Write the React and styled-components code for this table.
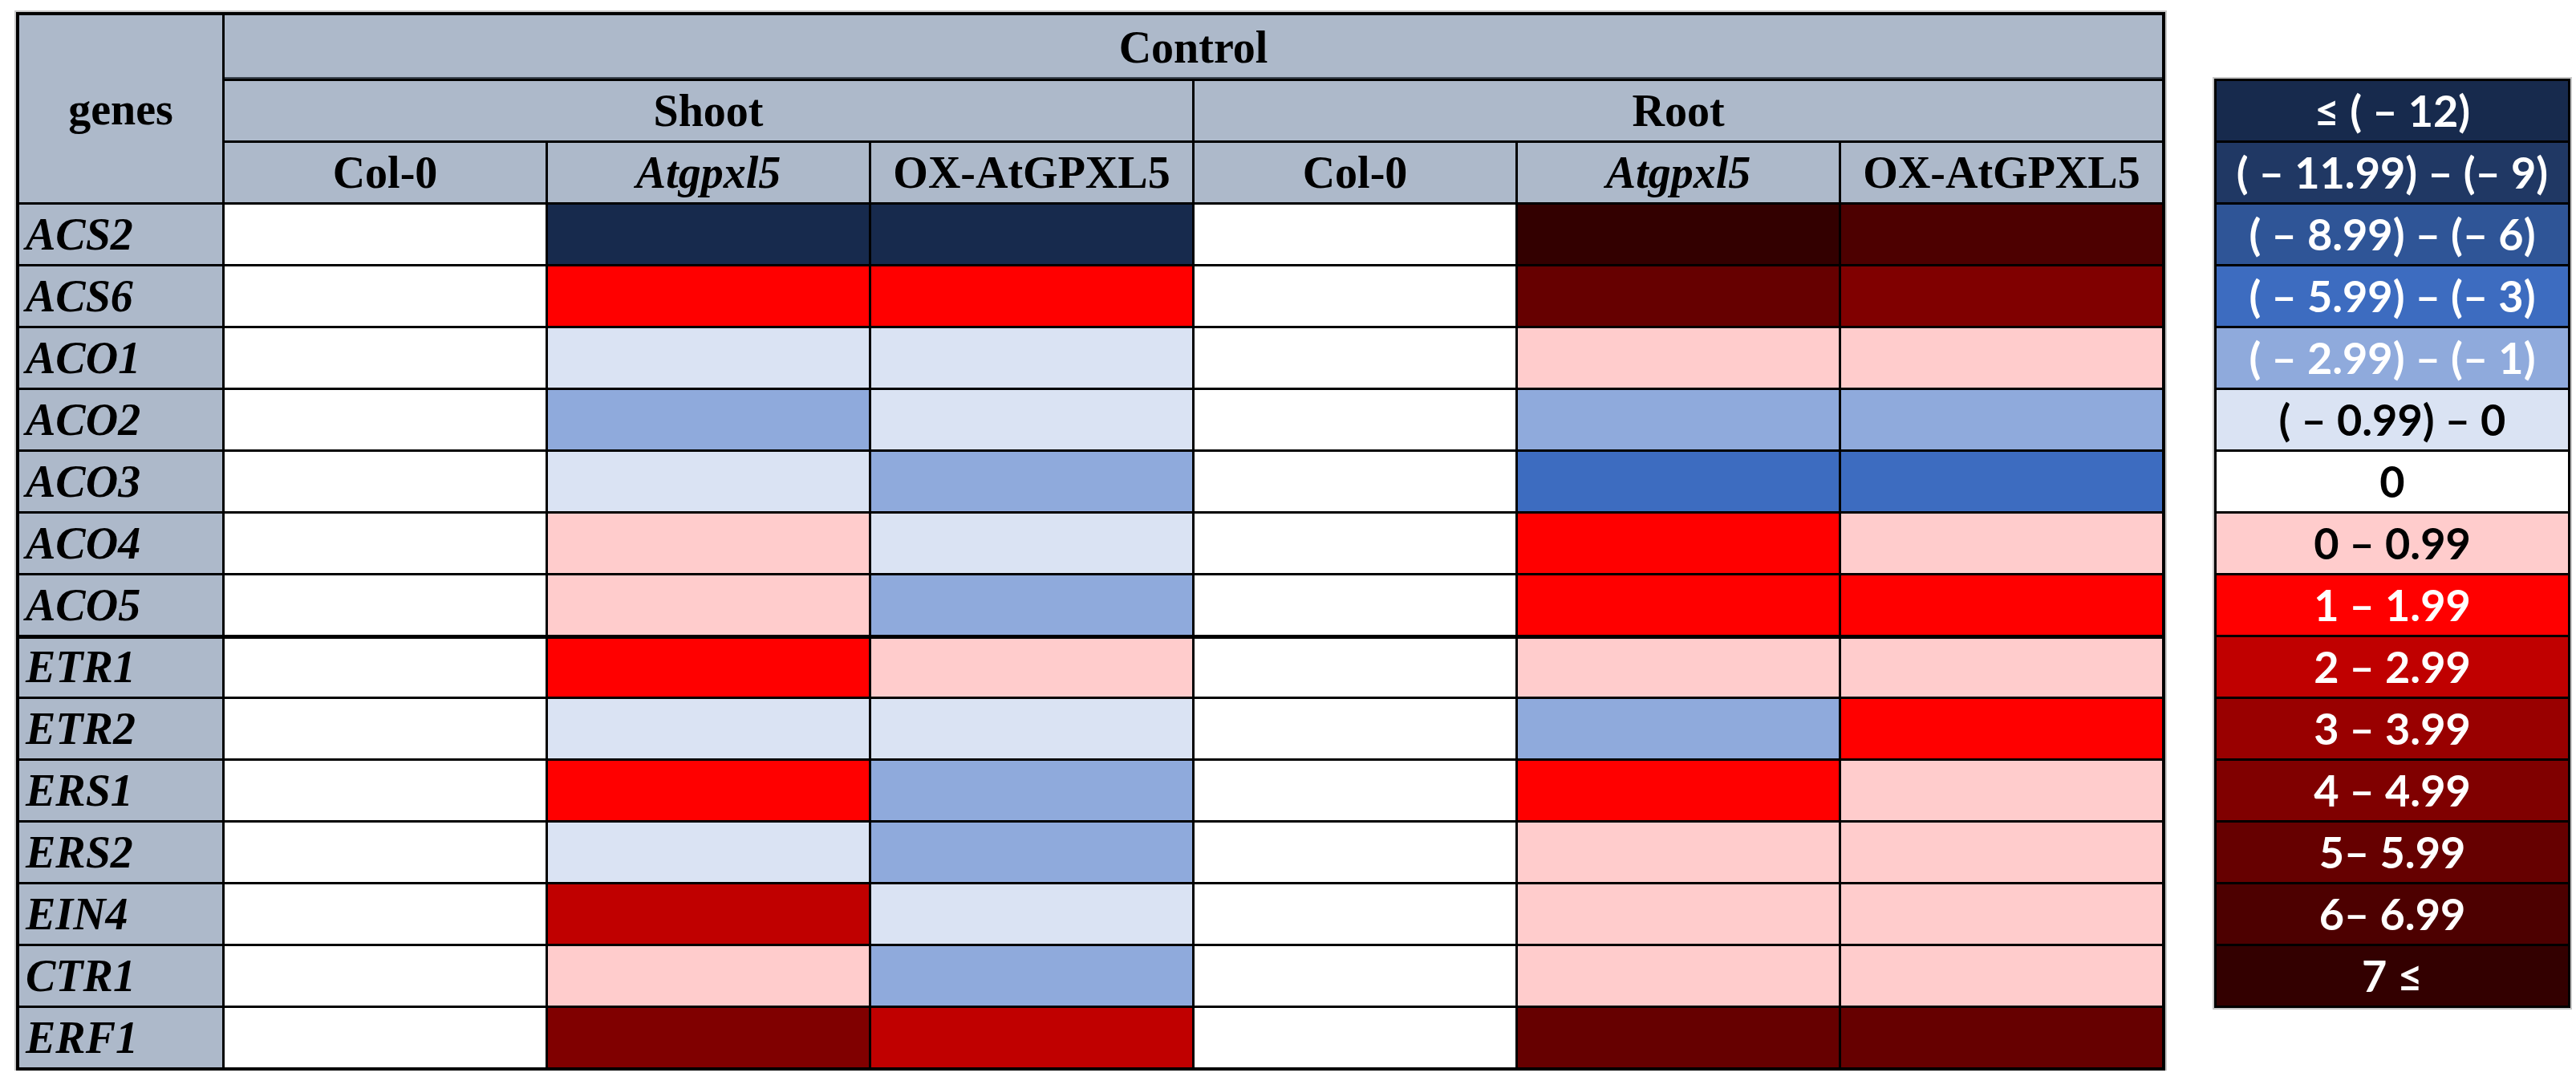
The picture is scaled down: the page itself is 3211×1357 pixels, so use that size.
import React from 'react';
import styled, { createGlobalStyle } from 'styled-components';

const GlobalStyle = createGlobalStyle`
  html, body {
    margin: 0;
    padding: 0;
    background: #fff;
  }
`;

/* colour scale, same order as the legend */
const SCALE = {
  n12: '#172a4d',
  n9: '#203864',
  n6: '#2f5597',
  n3: '#3d6cc0',
  n1: '#8faadc',
  n0: '#dae3f3',
  z: '#ffffff',
  p0: '#ffcccc',
  p1: '#ff0000',
  p2: '#c00000',
  p3: '#990000',
  p4: '#800000',
  p5: '#660000',
  p6: '#4d0000',
  p7: '#330000',
};

const LEGEND = [
  { key: 'n12', label: '≤ ( – 12)', light: true },
  { key: 'n9', label: '( – 11.99) – (– 9)', light: true },
  { key: 'n6', label: '( – 8.99) – (– 6)', light: true },
  { key: 'n3', label: '( – 5.99) – (– 3)', light: true },
  { key: 'n1', label: '( – 2.99) – (– 1)', light: true },
  { key: 'n0', label: '( – 0.99) – 0' },
  { key: 'z', label: '0' },
  { key: 'p0', label: '0 – 0.99' },
  { key: 'p1', label: '1 – 1.99', light: true },
  { key: 'p2', label: '2 – 2.99', light: true },
  { key: 'p3', label: '3 – 3.99', light: true },
  { key: 'p4', label: '4 – 4.99', light: true },
  { key: 'p5', label: '5– 5.99', light: true },
  { key: 'p6', label: '6– 6.99', light: true },
  { key: 'p7', label: '7 ≤', light: true },
];

// shoot: Col-0, Atgpxl5, OX | root: Col-0, Atgpxl5, OX
const GENES = [
  { name: 'ACS2', v: ['z', 'n12', 'n12', 'z', 'p7', 'p6'] },
  { name: 'ACS6', v: ['z', 'p1', 'p1', 'z', 'p5', 'p4'] },
  { name: 'ACO1', v: ['z', 'n0', 'n0', 'z', 'p0', 'p0'] },
  { name: 'ACO2', v: ['z', 'n1', 'n0', 'z', 'n1', 'n1'] },
  { name: 'ACO3', v: ['z', 'n0', 'n1', 'z', 'n3', 'n3'] },
  { name: 'ACO4', v: ['z', 'p0', 'n0', 'z', 'p1', 'p0'] },
  { name: 'ACO5', v: ['z', 'p0', 'n1', 'z', 'p1', 'p1'] },
  { name: 'ETR1', v: ['z', 'p1', 'p0', 'z', 'p0', 'p0'], thick: true },
  { name: 'ETR2', v: ['z', 'n0', 'n0', 'z', 'n1', 'p1'] },
  { name: 'ERS1', v: ['z', 'p1', 'n1', 'z', 'p1', 'p0'] },
  { name: 'ERS2', v: ['z', 'n0', 'n1', 'z', 'p0', 'p0'] },
  { name: 'EIN4', v: ['z', 'p2', 'n0', 'z', 'p0', 'p0'] },
  { name: 'CTR1', v: ['z', 'p0', 'n1', 'z', 'p0', 'p0'] },
  { name: 'ERF1', v: ['z', 'p4', 'p2', 'z', 'p5', 'p5'] },
];

const Page = styled.div`
  display: flex;
  align-items: flex-start;
  padding: 15px 0 0 20px;
`;

const Table = styled.div`
  display: grid;
  grid-template-columns: 253px repeat(6, 400px);
  grid-template-rows: 79px repeat(16, 74px);
  gap: 3px;
  background: #000;
  border: 4px solid #000;
  box-shadow: 0 0 0 2px #c8c8c8;
  font-family: 'Liberation Serif', 'Times New Roman', serif;
  font-weight: bold;
  font-size: 56px;
  color: #000;
`;

const Head = styled.div`
  background: #adb9ca;
  display: flex;
  align-items: center;
  justify-content: center;
  line-height: 1;
  font-style: ${(p) => (p.italic ? 'italic' : 'normal')};
  grid-column: ${(p) => p.col || 'auto'};
  grid-row: ${(p) => p.row || 'auto'};
  box-shadow: ${(p) => (p.underline ? 'inset 0 -2px 0 #3c4550' : 'none')};
`;

const GeneName = styled.div`
  background: #adb9ca;
  display: flex;
  align-items: center;
  padding-left: 8px;
  line-height: 1;
  font-style: italic;
  box-shadow: ${(p) => (p.thick ? 'inset 0 2px 0 #000' : 'none')};
`;

const Cell = styled.div`
  background: ${(p) => p.fill};
  box-shadow: ${(p) => (p.thick ? 'inset 0 2px 0 #000' : 'none')};
`;

const Legend = styled.div`
  display: grid;
  grid-template-columns: 438px;
  grid-auto-rows: 74px;
  gap: 3px;
  margin: 83px 0 0 61px;
  background: #000;
  border: 3px solid #000;
  box-shadow: 0 0 0 2px #c8c8c8;
`;

const LegendRow = styled.div`
  background: ${(p) => p.fill};
  color: ${(p) => (p.light ? '#fff' : '#000')};
  display: flex;
  align-items: center;
  justify-content: center;
  font-family: Lato, 'Open Sans', sans-serif;
  font-weight: bold;
  font-size: 54px;
  line-height: 1;
  white-space: pre;
`;

const COLUMNS = [
  { label: 'Col-0' },
  { label: 'Atgpxl5', italic: true },
  { label: 'OX-AtGPXL5' },
];

export default function App() {
  return (
    <>
      <GlobalStyle />
      <Page>
        <Table>
          <Head row="1 / span 3" col="1">genes</Head>
          <Head col="2 / span 6" underline>Control</Head>
          <Head col="2 / span 3">Shoot</Head>
          <Head col="5 / span 3">Root</Head>
          {[...COLUMNS, ...COLUMNS].map((c, i) => (
            <Head key={i} italic={c.italic}>{c.label}</Head>
          ))}
          {GENES.map((g) => (
            <React.Fragment key={g.name}>
              <GeneName thick={g.thick}>{g.name}</GeneName>
              {g.v.map((k, i) => (
                <Cell key={i} fill={SCALE[k]} thick={g.thick} />
              ))}
            </React.Fragment>
          ))}
        </Table>
        <Legend>
          {LEGEND.map((l) => (
            <LegendRow key={l.key} fill={SCALE[l.key]} light={l.light}>
              {l.label}
            </LegendRow>
          ))}
        </Legend>
      </Page>
    </>
  );
}
